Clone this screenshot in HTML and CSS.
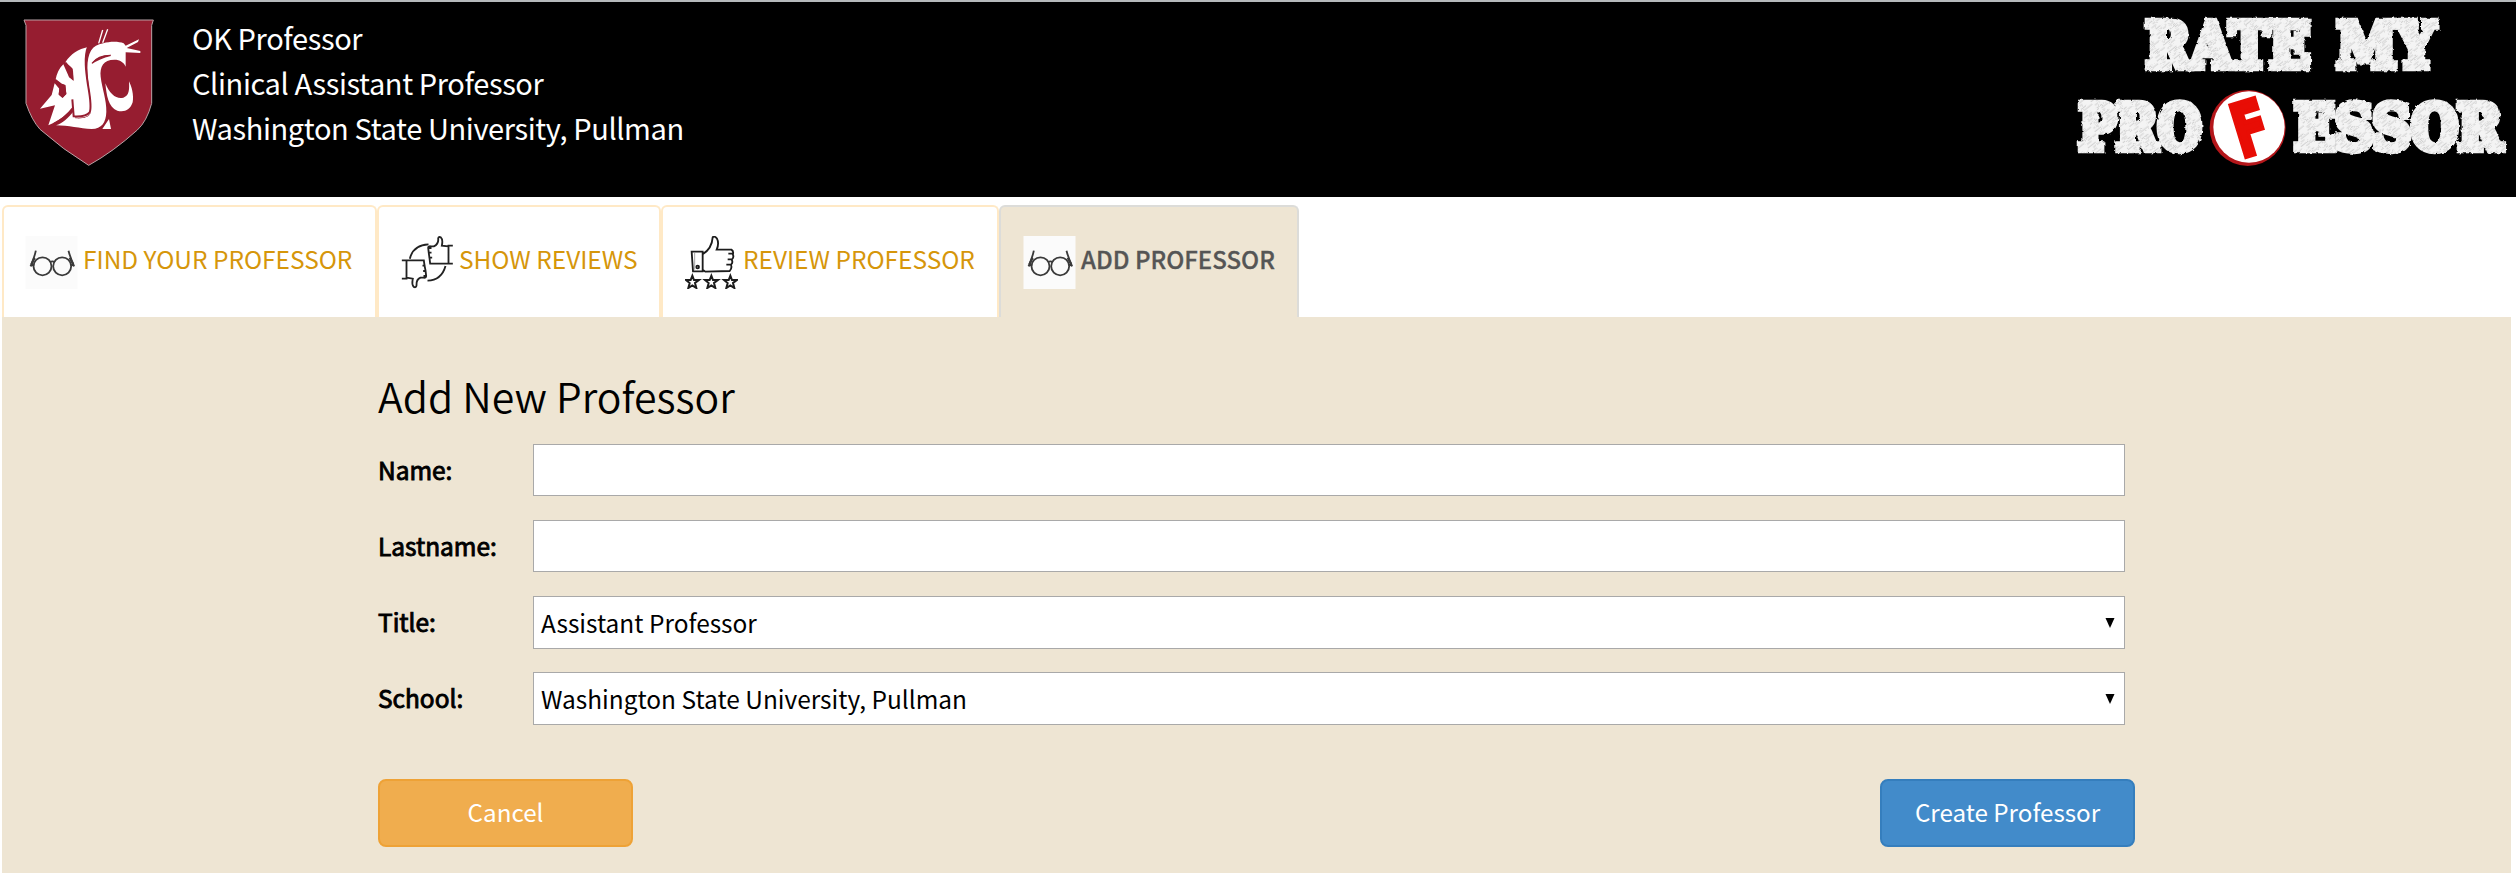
FILE: index.html
```html
<!DOCTYPE html>
<html lang="en">
<head>
<meta charset="utf-8">
<title>Rate My Professor</title>
<link rel="stylesheet" href="styles.css">
</head>
<body>
<header class="header">
  <svg class="crest" viewBox="0 0 600 594" width="200" height="198" aria-label="University crest">
    <path d="M72 60H460L455 76V310Q440 365 412 390Q340 455 266 496Q190 450 120 388Q95 360 78 310V76Z" fill="#961d30" stroke="#b9a3a6" stroke-width="3"/>
    <path fill="#fff" d="M264 141C235 147 212 162 196 187C204 196 212 198 218 206L220 240L207 231L190 193C177 205 170 222 167 238L180 249L196 255L199 282L187 293L176 284L178 266L164 250L155 285L120 326L165 316L145 376C178 362 200 345 217 325L222 352C250 356 273 347 273 335C276 295 262 265 259 220C257 183 259 158 264 141Z"/>
    <path fill="#fff" d="M377 200C372 187 360 179 343 179C310 179 299 200 302 230C306 265 320 300 319 335C318 368 305 386 275 387C240 386 205 376 168 376C187 370 207 352 219 336L226 355C250 357 266 352 272 340C276 300 262 250 262 205C263 158 275 135 310 130C330 124 356 124 371 130L377 137L417 118L414 126L380 144L421 153V159L377 157Z"/>
    <path d="M276 190C290 171 310 166 332 166C312 171 295 176 276 190Z" fill="#961d30" stroke="#961d30" stroke-width="4"/>
    <path d="M296 130L308 90M308 128L323 88" stroke="#fff" stroke-width="4"/>
    <path fill="#fff" d="M316 250C330 285 350 298 370 293C389 287 388 265 387 244C395 260 402 285 398 307C391 330 372 338 352 332C324 322 320 285 316 250ZM327 357L333 387H307Z"/>
    <path d="M264 141C252 170 258 215 264 255C270 290 276 320 269 337C260 349 240 350 221 349L217 298M218 325Q195 355 160 373M196 188L216 212M166 240L182 252" stroke="#961d30" stroke-width="6" fill="none"/>
    <path d="M205 205L219 212L221 243L207 231ZM180 250L196 256L199 282L188 294L176 283Z" fill="#961d30"/>
  </svg>
  <div class="info">
    <div>OK Professor</div>
    <div>Clinical Assistant Professor</div>
    <div>Washington State University, Pullman</div>
  </div>
  <svg class="brand" viewBox="0 0 1398 585" width="466" height="195" aria-label="Rate my professor">
    <defs>
      <pattern id="chalk" width="46" height="26" patternUnits="userSpaceOnUse" patternTransform="rotate(-38)">
        <rect width="46" height="26" fill="#f4f4f4"/>
        <path d="M0 4H30M14 12H46M4 20H22" stroke="#c8c8c8" stroke-width="2.5"/>
      </pattern>
      <filter id="rough" x="-5%" y="-5%" width="110%" height="110%"><feTurbulence type="fractalNoise" baseFrequency=".08" numOctaves="2" seed="4"/><feDisplacementMap in="SourceGraphic" scale="10"/></filter>
    </defs>
    <g class="chalk" filter="url(#rough)">
      <text x="287" y="201" textLength="494" lengthAdjust="spacingAndGlyphs">RATE</text>
      <text x="860" y="201" textLength="296" lengthAdjust="spacingAndGlyphs">MY</text>
      <text x="86" y="446" textLength="368" lengthAdjust="spacingAndGlyphs">PRO</text>
      <text x="733" y="446" textLength="624" lengthAdjust="spacingAndGlyphs">ESSOR</text>
    </g>
    <circle cx="593" cy="384" r="114" fill="#b4161a"/>
    <circle cx="597" cy="381" r="107" fill="#fff"/>
    <text class="grade" x="548" y="465" transform="rotate(-17 593 384)" textLength="104" lengthAdjust="spacingAndGlyphs">F</text>
  </svg>
</header>

<svg class="defs" width="0" height="0">
  <symbol id="glasses" viewBox="0 0 156 159">
    <rect width="156" height="159" fill="#fbfbfb"/>
    <g fill="none" stroke="#3a3a3a" stroke-width="5.5">
      <circle cx="51" cy="91" r="27"/><circle cx="110" cy="91" r="27"/>
      <path d="M73 78Q81 74 88 78M26 85L15 90M15 91Q26 67 31 44M135 85L147 90M146 91Q135 67 129 44" />
      <path d="M18 85L27 65M143 85L133 65" stroke-width="7"/>
    </g>
  </symbol>
  <symbol id="reviews" viewBox="0 0 156 159">
    <g fill="none" stroke="#222" stroke-width="5.5">
      <path d="M25 68Q35 27 81 25M78 134Q120 133 132 90"/>
      <path d="M154 29H141V83H154M141 83H86L84 66L82 52L80 35Q80 30 88 31H97Q112 24 110 8Q111 1 118 4Q125 10 121 29L141 31M80 36H90M80 50H90M82 65H92"/>
      <path d="M1 128H15V73H1M15 73H67L69 88L72 103L74 120Q74 126 66 125H57Q44 130 45 148Q44 156 37 153Q30 147 34 128L15 125M63 89H72M65 105H74M66 120H74"/>
    </g>
  </symbol>
  <symbol id="stars" viewBox="0 0 159 159">
    <g fill="none" stroke="#1c1c1c" stroke-width="5.5">
      <path d="M20 47H53V106H24Z M53 55Q81 37 83 4Q88-2 96 8Q103 22 95 41H139Q146 45 144 53H130M143 54Q148 64 141 70H128M140 71Q145 80 138 86H124M138 87Q142 96 134 105L61 107L53 101"/>
      <path d="M29 51V101" stroke="#777" stroke-width="2"/>
      <circle cx="38" cy="93" r="4"/>
      <path id="star" stroke-width="6" d="M22 119L27 132H42L30 141L34 156L22 148L10 156L14 141L3 132H17Z"/>
      <use href="#star" x="57"/><use href="#star" x="114"/>
    </g>
  </symbol>
</svg>

<nav class="tabs">
  <a class="tab tab-find"><svg class="icon"><use href="#glasses"/></svg><span>FIND YOUR PROFESSOR</span></a>
  <a class="tab tab-show"><svg class="icon"><use href="#reviews"/></svg><span>SHOW REVIEWS</span></a>
  <a class="tab tab-review"><svg class="icon"><use href="#stars"/></svg><span>REVIEW PROFESSOR</span></a>
  <a class="tab tab-add active"><svg class="icon"><use href="#glasses"/></svg><span>ADD PROFESSOR</span></a>
</nav>

<main class="panel">
  <form class="form">
    <h1>Add New Professor</h1>
    <div class="row"><label>Name:</label><div class="field"></div></div>
    <div class="row"><label>Lastname:</label><div class="field"></div></div>
    <div class="row"><label>Title:</label><div class="field select"><span>Assistant Professor</span><svg width="10" height="10" viewBox="0 0 10 10"><path d="M.5 0H9.5L5 10Z"/></svg></div></div>
    <div class="row"><label>School:</label><div class="field select"><span>Washington State University, Pullman</span><svg width="10" height="10" viewBox="0 0 10 10"><path d="M.5 0H9.5L5 10Z"/></svg></div></div>
    <div class="actions">
      <button type="button" class="btn cancel">Cancel</button>
      <button type="button" class="btn create">Create Professor</button>
    </div>
  </form>
</main>
</body>
</html>
```
FILE: styles.css
```css
* { box-sizing: border-box; }
body {
  margin: 0;
  height: 873px;
  overflow: hidden;
  background: #fff;
  color: #000;
  font-family: "Noto Sans CJK JP", "Noto Sans", sans-serif;
  font-size: 24.45px;
}
.header {
  display: flex;
  height: 197px;
  background: #000;
  border-top: 2px solid #b5b9bb;
}
.crest, .brand { flex: none; margin-top: -2px; }
.brand { overflow: visible; }
.info {
  flex: 1;
  margin-left: -8px;
  padding-top: 13px;
  color: #fff;
  font-size: 29px;
  letter-spacing: -.38px;
  line-height: 45px;
  white-space: nowrap;
}
.chalk {
  font-family: "DejaVu Serif", serif;
  font-weight: bold;
  font-size: 187px;
  fill: url(#chalk);
  stroke: url(#chalk);
  stroke-width: 25px;
}
.grade {
  font-family: "DejaVu Sans", sans-serif;
  font-weight: bold;
  font-size: 220px;
  fill: #e80d05;
  stroke: #e80d05;
  stroke-width: 14px;
}
.defs { display: block; }
.tabs {
  display: flex;
  margin: 8px 0 0 2px;
  height: 112px;
}
.tab {
  display: flex;
  padding: 29px 0 0 22px;
  border: 2px solid #ffe9c6;
  border-bottom: 0;
  border-radius: 6px 6px 0 0;
  color: #d6960a;
  line-height: 46px;
  white-space: nowrap;
}
.tab-find { width: 375px; }
.tab-show { width: 284px; }
.tab-review { width: 338px; }
.tab-add { width: 300px; }
.tab.active {
  background: #eee5d3;
  border-color: #dcdcd9;
  color: #555;
  font-size: 24px;
  font-weight: 500;
  -webkit-text-stroke: .3px #555;
}
.icon { width: 53px; height: 53px; margin-right: 5px; flex: none; }
.tab-find .icon { margin: 0 5px 0 -1px; }
.panel {
  margin: 0 5px 0 2px;
  height: 556px;
  background: #eee5d3;
}
.form { width: 1757px; padding-top: 48px; margin-left: 376px; }
h1 {
  margin: 0;
  height: 79px;
  font-size: 41px;
  font-weight: 350;
  line-height: 60px;
}
.row {
  display: flex;
  align-items: center;
  width: 1747px;
  height: 52px;
  margin-bottom: 24px;
}
label { width: 155px; padding-bottom: 2px; -webkit-text-stroke: .9px #000; }
.field {
  flex: 1;
  display: flex;
  align-items: center;
  justify-content: space-between;
  height: 52px;
  padding: 0 9px 0 7px;
  border: 1px solid #a9a9a9;
  background: #fff;
}
.select { height: 53px; margin-bottom: -1px; }
.actions { display: flex; justify-content: space-between; padding-top: 31px; }
.btn {
  width: 255px;
  height: 68px;
  padding-bottom: 4px;
  border: 2px solid;
  border-radius: 8px;
  color: #fff;
  font: inherit;
  font-size: 24.2px;
}
.cancel { background: #f0ad4e; border-color: #eea236; }
.create { background: #428bca; border-color: #357ebd; }
```
